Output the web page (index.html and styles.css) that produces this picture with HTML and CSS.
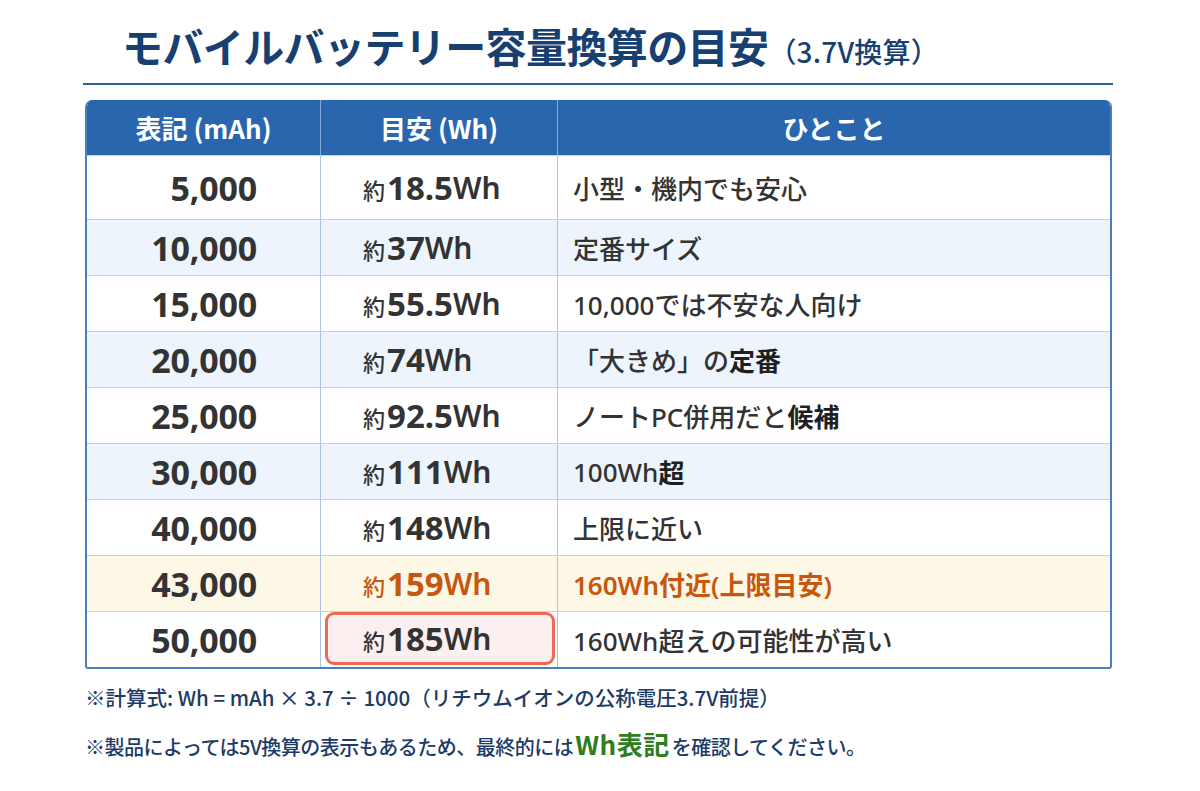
FILE: index.html
```html
<!DOCTYPE html>
<html lang="ja">
<head>
<meta charset="utf-8">
<title>モバイルバッテリー容量換算の目安</title>
<link rel="stylesheet" href="styles.css">
</head>
<body>
<div class="page">
  <h1 class="title">モバイルバッテリー容量換算の目安<span class="sub">（3.7V換算）</span></h1>

  <div class="table">
    <div class="row head">
      <div class="cell hc">表記 (mAh)</div>
      <div class="cell hc">目安 (Wh)</div>
      <div class="cell hc">ひとこと</div>
    </div>
    <div class="row first">
      <div class="cell mah">5,000</div>
      <div class="cell wh"><span class="yaku">約</span><span class="num">18.5</span><span class="unit">Wh</span></div>
      <div class="cell note">小型・機内でも安心</div>
    </div>
    <div class="row alt">
      <div class="cell mah">10,000</div>
      <div class="cell wh"><span class="yaku">約</span><span class="num">37</span><span class="unit">Wh</span></div>
      <div class="cell note">定番サイズ</div>
    </div>
    <div class="row">
      <div class="cell mah">15,000</div>
      <div class="cell wh"><span class="yaku">約</span><span class="num">55.5</span><span class="unit">Wh</span></div>
      <div class="cell note">10,000では不安な人向け</div>
    </div>
    <div class="row alt">
      <div class="cell mah">20,000</div>
      <div class="cell wh"><span class="yaku">約</span><span class="num">74</span><span class="unit">Wh</span></div>
      <div class="cell note">「大きめ」の <strong class="strong">定番</strong></div>
    </div>
    <div class="row">
      <div class="cell mah">25,000</div>
      <div class="cell wh"><span class="yaku">約</span><span class="num">92.5</span><span class="unit">Wh</span></div>
      <div class="cell note">ノートPC併用だと<strong class="strong">候補</strong></div>
    </div>
    <div class="row alt">
      <div class="cell mah">30,000</div>
      <div class="cell wh"><span class="yaku">約</span><span class="num">111</span><span class="unit">Wh</span></div>
      <div class="cell note">100Wh<strong class="strong">超</strong></div>
    </div>
    <div class="row">
      <div class="cell mah">40,000</div>
      <div class="cell wh"><span class="yaku">約</span><span class="num">148</span><span class="unit">Wh</span></div>
      <div class="cell note">上限に近い</div>
    </div>
    <div class="row warn">
      <div class="cell mah">43,000</div>
      <div class="cell wh orange"><span class="yaku">約</span><span class="num">159</span><span class="unit">Wh</span></div>
      <div class="cell note orange">160Wh付近(上限目安)</div>
    </div>
    <div class="row last">
      <div class="cell mah">50,000</div>
      <div class="cell wh"><div class="mark"><span class="yaku">約</span><span class="num">185</span><span class="unit">Wh</span></div></div>
      <div class="cell note">160Wh超えの可能性が高い</div>
    </div>
  </div>

  <div class="notes">
    <p class="fn">※計算式: Wh = mAh × 3.7 ÷ 1000（リチウムイオンの公称電圧3.7V前提）</p>
    <p class="fn fn2">※製品によっては5V換算の表示もあるため、最終的には<strong class="green">Wh表記</strong>を確認してください。</p>
  </div>
</div>
</body>
</html>
```

FILE: styles.css
```css
* { box-sizing: border-box; }

body {
  margin: 0;
  background: #ffffff;
  font-family: "Noto Sans", "Noto Sans CJK JP", sans-serif;
  color: #333333;
}

.page {
  width: 1030px;
  margin-left: 83px;
}

.title {
  margin: 0;
  padding: 18px 0 11px 39px;
  font-family: "Noto Sans CJK JP", "Noto Sans", sans-serif;
  font-size: 41px;
  font-weight: 700;
  line-height: 54px;
  color: #173f70;
  border-bottom: 2px solid #2f609c;
  letter-spacing: -0.6px;
}

.title .sub {
  font-size: 28px;
  font-weight: 500;
  line-height: 1;
  letter-spacing: 0.2px;
}

.table {
  margin: 15px 1px 0 2px;
  border: 2px solid #4a7ebd;
  border-top: none;
  border-radius: 7px 7px 3px 3px;
  overflow: hidden;
}

.row {
  display: grid;
  grid-template-columns: 233px 237px 1fr;
  height: 56px;
  border-top: 1px solid #bcd3ea;
  background: #ffffff;
}

.row.first { height: 64px; }
.row.alt { background: #edf4fb; }
.row.warn { background: #fdf7e5; }

.head {
  height: 55px;
  border-top: none;
  background: #2a66ae;
  color: #ffffff;
}

.cell {
  display: flex;
  align-items: center;
  border-left: 1px solid #aac5e3;
}

.cell:first-child { border-left: none; }

.head .cell { border-left: 1px solid #86aad6; }
.head .cell:first-child { border-left: none; }

.hc {
  justify-content: center;
  font-family: "Noto Sans CJK JP", "Noto Sans", sans-serif;
  font-size: 26px;
  font-weight: 700;
}

.mah {
  justify-content: flex-end;
  padding-right: 63px;
  font-size: 34px;
  font-weight: 700;
  color: #333333;
  letter-spacing: -0.2px;
}

.wh {
  padding-left: 42px;
  color: #333333;
}

.yaku {
  font-family: "Noto Sans CJK JP", sans-serif;
  font-size: 22px;
  font-weight: 500;
  margin-right: 2px;
  position: relative;
  top: 1px;
}

.num {
  font-size: 33px;
  font-weight: 700;
}

.unit {
  font-size: 30px;
  font-weight: 600;
}

.orange { color: #c7560f; }

.last .wh {
  padding: 0 2px 2px 4px;
  align-items: stretch;
}

.mark {
  flex: 1;
  display: flex;
  align-items: center;
  padding-left: 35px;
  border: 3px solid #ee6a56;
  border-radius: 9px;
  background: #fcefef;
}

.note {
  padding-left: 15px;
  font-family: "Noto Sans", "Noto Sans CJK JP", sans-serif;
  font-size: 26px;
  font-weight: 500;
  color: #333333;
}

.note.orange {
  color: #c7560f;
  font-weight: 600;
}

.strong {
  font-weight: 700;
  color: #1f1f1f;
}

.notes {
  margin-top: 10px;
  padding-left: 2px;
  color: #1d3b66;
}

.fn {
  margin: 0 0 11px;
  font-family: "Noto Sans CJK JP", "Noto Sans", sans-serif;
  font-size: 20.5px;
  font-weight: 500;
  line-height: 36px;
}

.fn2 {
  font-size: 20px;
  letter-spacing: -0.5px;
}

.green {
  font-size: 26px;
  font-weight: 700;
  color: #2f7d1f;
  margin: 0 2px;
  letter-spacing: 0.5px;
}
```
